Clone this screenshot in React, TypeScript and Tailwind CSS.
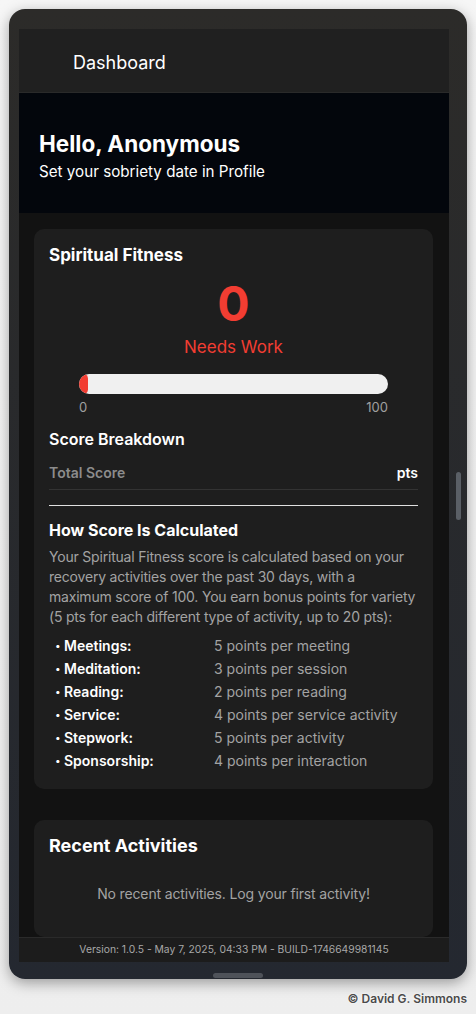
export default function App() {
  const rules = [
    { label: 'Meetings:', value: '5 points per meeting' },
    { label: 'Meditation:', value: '3 points per session' },
    { label: 'Reading:', value: '2 points per reading' },
    { label: 'Service:', value: '4 points per service activity' },
    { label: 'Stepwork:', value: '5 points per activity' },
    { label: 'Sponsorship:', value: '4 points per interaction' },
  ]

  return (
    <div className="min-h-screen w-full bg-gradient-to-b from-[#f6f6f6] to-[#eeeeee] font-['Inter',sans-serif] pt-[9px] px-[9px]">
      <div className="w-[458px] h-[970px] rounded-[16px] bg-gradient-to-b from-[#2c2b29] to-[#242830] shadow-[0_4px_14px_rgba(0,0,0,0.35)] flex flex-col pt-[20px] pl-[10px]">
        <div className="flex h-[933px]">
          {/* screen */}
          <div className="w-[430px] h-full flex flex-col bg-[#121212] overflow-hidden">
            <div className="h-[64px] shrink-0 bg-[#202020] flex items-center pl-[54px] pt-[4px] border-b border-[#2a2a2a]">
              <span className="text-white text-[18px] font-normal">Dashboard</span>
            </div>
            <div className="h-[120px] shrink-0 bg-[#03060c] flex flex-col justify-center px-[20px] pt-[5px]">
              <h1 className="text-white text-[22.5px] font-bold leading-[30px]">Hello, Anonymous</h1>
              <p className="text-white text-[15.2px] leading-[20px] mt-[3px]">Set your sobriety date in Profile</p>
            </div>

            <div className="flex-1 flex flex-col px-[15px] pt-[16px] gap-[31px]">
              <div className="w-[399px] rounded-[10px] bg-[#1e1e1e] px-[15px] pt-[14px] h-[560px]">
                <h2 className="text-white text-[17px] font-bold leading-[24px]">Spiritual Fitness</h2>
                <div className="flex flex-col items-center mt-[10px]">
                  <div className="text-[#f23d32] text-[48px] font-bold leading-[54px]">0</div>
                  <div className="text-[#f23d32] text-[17px] leading-[24px] mt-[4px]">Needs Work</div>
                </div>
                <div className="px-[30px] mt-[15px]">
                  <div className="h-[20px] rounded-full bg-[#f0f0f0] overflow-hidden">
                    <div className="h-full w-[9px] rounded-full bg-[#f23d32]"></div>
                  </div>
                  <div className="flex justify-between text-[13px] text-[#a0a0a0] leading-[18px] mt-[4px]">
                    <span>0</span>
                    <span>100</span>
                  </div>
                </div>
                <h3 className="text-white text-[16px] font-semibold leading-[22px] mt-[12px]">Score Breakdown</h3>
                <div className="flex justify-between items-center mt-[13px] pb-[6px] border-b border-[#333333]">
                  <span className="text-[#8c8c8c] text-[14px] font-semibold leading-[20px]">Total Score</span>
                  <span className="text-white text-[14px] font-semibold leading-[20px]">pts</span>
                </div>
                <div className="h-px bg-[#e0e0e0] mt-[15px]"></div>
                <h3 className="text-white text-[16px] font-bold leading-[22px] mt-[13px]">How Score Is Calculated</h3>
                <p className="text-[#a3a3a3] text-[14px] leading-[20px] tracking-[-0.2px] mt-[6px]">
                  Your Spiritual Fitness score is calculated based on your recovery activities over the past 30 days, with a maximum score of 100. You earn bonus points for variety (5 pts for each different type of activity, up to 20 pts):
                </p>
                <ul className="mt-[7px] pl-[6px]">
                  {rules.map((r) => (
                    <li key={r.label} className="flex items-center text-[14px] leading-[23px]">
                      <span className="w-[9px] text-white text-[10px]">•</span>
                      <span className="w-[150px] text-white font-semibold">{r.label}</span>
                      <span className="text-[#a3a3a3]">{r.value}</span>
                    </li>
                  ))}
                </ul>
              </div>

              <div className="w-[399px] rounded-[10px] bg-[#1e1e1e] px-[15px] pt-[14px] h-[117px]">
                <h2 className="text-white text-[18px] font-bold leading-[24px]">Recent Activities</h2>
                <p className="text-[#a3a3a3] text-[14px] tracking-[-0.15px] text-center leading-[20px] mt-[26px]">No recent activities. Log your first activity!</p>
              </div>
            </div>

            <div className="h-[25px] shrink-0 bg-[#1c1c1c] border-t border-[#2a2a2a] flex items-center justify-center">
              <span className="text-[#a8a8a8] text-[10.3px]">Version: 1.0.5 - May 7, 2025, 04:33 PM - BUILD-1746649981145</span>
            </div>
          </div>
          {/* scrollbar */}
          <div className="flex-1 flex justify-center pt-[443px]">
            <div className="w-[5px] h-[48px] rounded-full bg-[#5a5f66]"></div>
          </div>
        </div>
        <div className="flex justify-center pr-[10px] mt-[11px]">
          <div className="w-[50px] h-[5px] rounded-full bg-[#4e5259]"></div>
        </div>
      </div>
      <div className="w-[458px] flex justify-end mt-[11px]">
        <span className="text-[12px] text-[#4a4a4a] font-semibold [text-shadow:0_0_2px_#fff]">© David G. Simmons</span>
      </div>
    </div>
  )
}
